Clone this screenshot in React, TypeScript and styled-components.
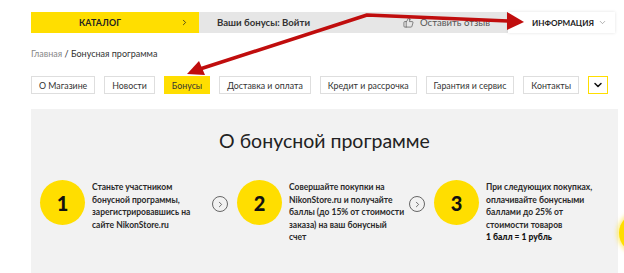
import React from 'react'
import styled, { createGlobalStyle } from 'styled-components'
import { ThumbsUp, ChevronDown, ChevronRight } from 'lucide-react'

const yellow = '#ffde00'

const GlobalStyle = createGlobalStyle`
  html, body {
    margin: 0;
    padding: 0;
    background: #fff;
  }
  body {
    font-family: Lato, 'Liberation Sans', sans-serif;
    color: #222;
  }
`

const Page = styled.div`
  position: relative;
  width: 624px;
  height: 273px;
  overflow: hidden;
  padding: 12px 6px 0 31px;
  box-sizing: border-box;
`

const TopBar = styled.div`
  display: flex;
  height: 21px;
  width: 584px;
  font-size: 9.6px;
  white-space: nowrap;
`

const Catalog = styled.div`
  width: 168px;
  background: ${yellow};
  display: flex;
  align-items: center;
  justify-content: space-between;
  padding: 0 10px 0 48px;
  box-sizing: border-box;
  font-size: 8.8px;
  font-weight: 700;
  letter-spacing: 0.2px;
`

const BonusBar = styled.div`
  flex: 1;
  background: #e6e6e6;
  display: flex;
  align-items: center;
  padding: 0 18px;
  font-weight: 700;
  color: #333;
`

const Review = styled.span`
  margin-left: auto;
  display: flex;
  align-items: center;
  gap: 6px;
  font-weight: 400;
  color: #555;
`

const Info = styled.div`
  width: 107px;
  background: #fff;
  box-shadow: 0 0 3px rgba(0, 0, 0, 0.12);
  display: flex;
  align-items: center;
  gap: 4px;
  padding-left: 24px;
  box-sizing: border-box;
  font-weight: 700;
  font-size: 8.1px;
  color: #222;
`

const Crumbs = styled.div`
  margin-top: 15px;
  font-size: 9px;
  line-height: 12px;
  color: #333;
`

const CrumbLink = styled.span`
  color: #888;
`

const Tabs = styled.div`
  display: flex;
  justify-content: space-between;
  width: 577px;
  margin-top: 16px;
  white-space: nowrap;
`

const Tab = styled.div<{ $active?: boolean }>`
  flex: none;
  height: 18px;
  padding: 0 7px;
  display: flex;
  align-items: center;
  font-size: 8.8px;
  color: #333;
  box-sizing: border-box;
  border: 1px solid ${(p) => (p.$active ? yellow : '#dedede')};
  background: ${(p) => (p.$active ? yellow : '#fff')};
`

const MoreTab = styled.div`
  flex: none;
  width: 20px;
  height: 18px;
  box-sizing: border-box;
  border: 1px solid ${yellow};
  display: flex;
  align-items: center;
  justify-content: center;
`

const Panel = styled.section`
  margin-top: 15px;
  width: 587px;
  height: 164px;
  background: #f2f2f2;
  padding: 18px 0 0 9px;
  box-sizing: border-box;
`

const Title = styled.h2`
  margin: 0;
  padding-right: 9px;
  text-align: center;
  font-size: 19.5px;
  line-height: 28px;
  font-weight: 400;
  color: #222;
`

const Steps = styled.div`
  display: flex;
  align-items: flex-start;
  margin-top: 25px;
`

const Step = styled.div`
  display: flex;
  align-items: flex-start;
  gap: 7px;
`

const Num = styled.div`
  flex: none;
  width: 45px;
  height: 45px;
  border-radius: 50%;
  background: ${yellow};
  display: flex;
  align-items: center;
  justify-content: center;
  font-size: 20px;
  font-weight: 900;
  color: #111;
`

const StepText = styled.div`
  width: 116px;
  padding-top: 1px;
  font-size: 8.5px;
  line-height: 12.5px;
  font-weight: 700;
  color: #2a2a2a;
`

const Strong = styled.span`
  font-weight: 900;
  color: #111;
`

const Next = styled.div`
  flex: none;
  width: 16px;
  height: 16px;
  margin: 16px 9px 0 4px;
  border-radius: 50%;
  border: 1px solid #666;
  box-sizing: border-box;
  display: flex;
  align-items: center;
  justify-content: center;
  color: #444;
`

const Float = styled.div`
  position: absolute;
  left: 619px;
  top: 213px;
  width: 40px;
  height: 40px;
  border-radius: 50%;
  background: ${yellow};
  box-shadow: 0 0 4px 2px rgba(255, 222, 0, 0.5);
`

const Overlay = styled.svg`
  position: absolute;
  left: 0;
  top: 0;
  pointer-events: none;
`

const tabs = ['О Магазине', 'Новости', 'Бонусы', 'Доставка и оплата', 'Кредит и рассрочка', 'Гарантия и сервис', 'Контакты']

export default function App() {
  return (
    <>
      <GlobalStyle />
      <Page>
        <TopBar>
          <Catalog>
            <span>КАТАЛОГ</span>
            <ChevronRight size={9} strokeWidth={2} />
          </Catalog>
          <BonusBar>
            <span>Ваши бонусы: Войти</span>
            <Review>
              <ThumbsUp size={11} strokeWidth={1.5} />
              Оставить отзыв
            </Review>
          </BonusBar>
          <Info>
            ИНФОРМАЦИЯ
            <ChevronDown size={9} strokeWidth={1.5} color="#777" />
          </Info>
        </TopBar>

        <Crumbs>
          <CrumbLink>Главная</CrumbLink> / Бонусная программа
        </Crumbs>

        <Tabs>
          {tabs.map((t) => (
            <Tab key={t} $active={t === 'Бонусы'}>
              {t}
            </Tab>
          ))}
          <MoreTab>
            <ChevronDown size={12} strokeWidth={3} color="#111" />
          </MoreTab>
        </Tabs>

        <Panel>
          <Title>О бонусной программе</Title>
          <Steps>
            <Step>
              <Num>1</Num>
              <StepText>
                Станьте участником бонусной программы, зарегистрировавшись на сайте NikonStore.ru
              </StepText>
            </Step>
            <Next>
              <ChevronRight size={9} strokeWidth={2} />
            </Next>
            <Step>
              <Num>2</Num>
              <StepText>
                Совершайте покупки на NikonStore.ru и получайте баллы (до 15% от стоимости заказа) на ваш бонусный счет
              </StepText>
            </Step>
            <Next>
              <ChevronRight size={9} strokeWidth={2} />
            </Next>
            <Step>
              <Num>3</Num>
              <StepText>
                При следующих покупках, оплачивайте бонусными баллами до 25% от стоимости товаров
                <br />
                <Strong>1 балл = 1 рубль</Strong>
              </StepText>
            </Step>
          </Steps>
        </Panel>

        <Float />

        <Overlay width="624" height="273" viewBox="0 0 624 273">
          <polyline
            points="200,69 367,15 508,21"
            fill="none"
            stroke="#c00d0d"
            strokeWidth="3.5"
            strokeLinejoin="round"
          />
          <polygon points="187,74 199,61 205,75" fill="#c00d0d" />
          <polygon points="507,12 524,22 507,30" fill="#c00d0d" />
        </Overlay>
      </Page>
    </>
  )
}
